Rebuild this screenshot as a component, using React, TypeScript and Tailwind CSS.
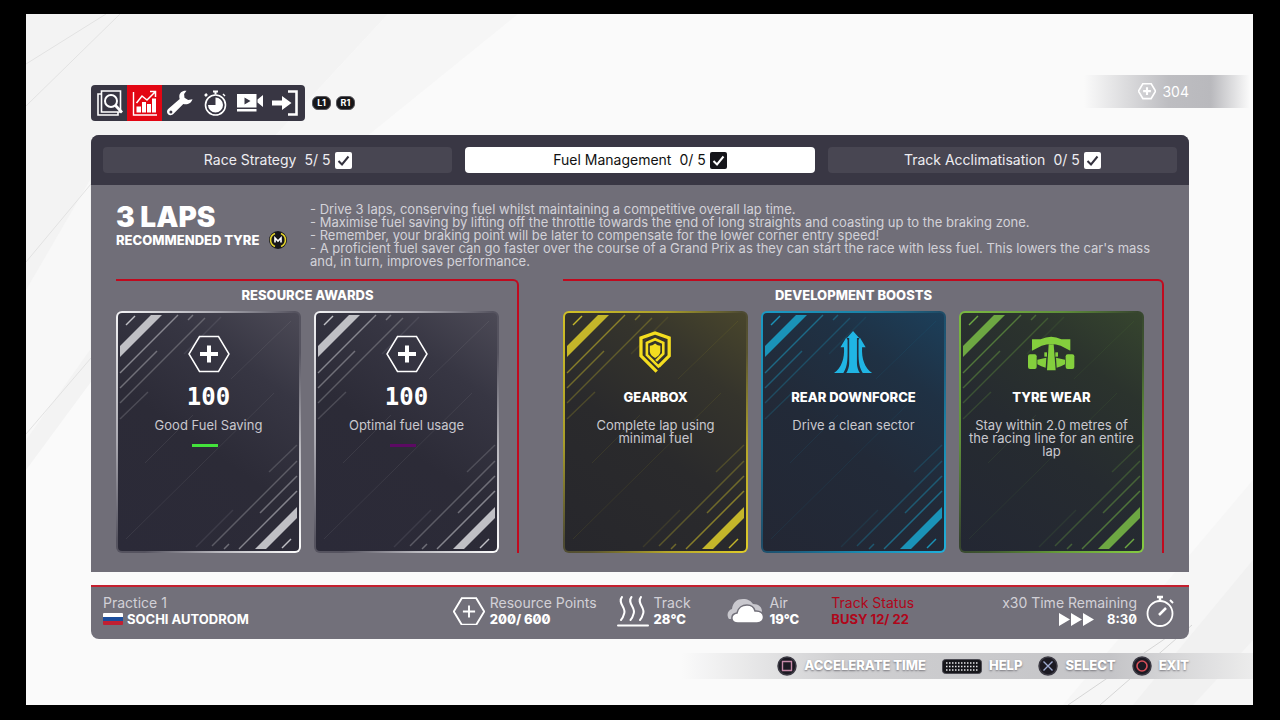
import type { ReactNode } from "react";

interface IconProps {
  className?: string;
}

interface Theme {
  frame: string;
  face: string;
  stripe: string;
}

interface CardData {
  id: string;
  icon: ReactNode;
  title: string;
  text: string;
  theme: Theme;
  reward?: boolean;
  bar?: string;
}

// ---------- Icons ----------

function SearchPagesIcon({ className }: IconProps) {
  return (
    <svg viewBox="0 0 26 26" className={className} fill="none" stroke="currentColor" aria-hidden="true">
      <path d="M4.500 1h19v21h-19z" strokeWidth="1.6" />
      <path d="M4 4H1v21h20v-3" strokeWidth="1.6" />
      <circle cx="14" cy="11" r="6" strokeWidth="2" />
      <path d="m18.500 15.500 6.500 7" strokeWidth="2.800" />
    </svg>
  );
}

function ChartIcon({ className }: IconProps) {
  return (
    <svg viewBox="0 0 26 26" className={className} fill="none" stroke="currentColor" aria-hidden="true">
      <path d="M1.500 2v23H25" strokeWidth="1.4" />
      <path d="M4.500 22.500v-6h4.500v6zM10 22.500V12h4v10.500zM15 22.500V14h4v8.500zM20 22.500V8.500h4v14z" fill="currentColor" stroke="none" />
      <path d="m4.500 13 5.500-7 5 4 8-8M18 1.500h5.500V7" strokeWidth="1.5" />
    </svg>
  );
}

function WrenchIcon({ className }: IconProps) {
  return (
    <svg viewBox="0 0 26 26" className={className} aria-hidden="true">
      <path
        d="M19.500.800c-4-.6-7.300 2-7.200 5.700 0 1 .1 1.700.4 2.500l-11 9.600c-1.900 1.600-2.300 4-.7 5.600 1.600 1.700 4.200 1.300 5.800-.6l9.500-9.700c4.200 1.200 8.200-1 9.200-4.700l-4.300.800-3.700-2.300-.4-3.800zM3.900 20.500a1.500 1.500 0 1 1 0 3 1.500 1.500 0 0 1 0-3z"
        fill="currentColor"
        fillRule="evenodd"
      />
    </svg>
  );
}

function TimerIcon({ className }: IconProps) {
  return (
    <svg viewBox="0 0 26 26" className={className} fill="none" stroke="currentColor" aria-hidden="true">
      <circle cx="13.500" cy="15" r="10" strokeWidth="1.6" />
      <path d="M13.500 7.500v7.500H6a7.500 7.500 0 1 0 7.500-7.500z" fill="currentColor" stroke="none" />
      <path d="M11 1.500h5M13.500 1.500v3" strokeWidth="2" />
      <path d="m3 6 2-2" strokeWidth="2.500" />
      <path d="m21 4 2 2" strokeWidth="1.500" />
    </svg>
  );
}

function VideoIcon({ className }: IconProps) {
  return (
    <svg viewBox="0 0 26 26" className={className} aria-hidden="true">
      <path d="M0 4h19.500v13.500H0zM7.500 7.500v7l6-3.500z" fill="currentColor" fillRule="evenodd" />
      <path d="M20.500 9.500 26 5v12l-5.500-4.500zM0 19h19.500v2.500H0z" fill="currentColor" />
    </svg>
  );
}

function ExitIcon({ className }: IconProps) {
  return (
    <svg viewBox="0 0 26 26" className={className} fill="none" stroke="currentColor" aria-hidden="true">
      <path d="M0 10.500h10V6l9.500 7L10 20v-4.500H0z" fill="currentColor" stroke="none" />
      <path d="M16 1.500h8.500v23H16" strokeWidth="2.600" />
    </svg>
  );
}

function HexPlusIcon({ className, bold }: IconProps & { bold?: boolean }) {
  return (
    <svg viewBox="0 0 42 38" className={className} fill="none" stroke="currentColor" aria-hidden="true">
      <path d="M11.500 1.500h19L41 19 30.500 36.500h-19L1 19z" strokeWidth={bold ? 4 : 2.500} />
      <path d={bold ? "M12 19h18M21 10v18" : "M13 19h16M21 11v16"} strokeWidth={bold ? 5 : 2.500} />
    </svg>
  );
}

function AwardIcon() {
  return (
    <svg viewBox="0 0 42 42" className="size-[42px]" fill="none" aria-hidden="true">
      <path d="M11.500 5.500h19L41 23l-10.500 17.500h-19L1 23z" stroke="#fff" strokeWidth="1.5" />
      <path d="M12 23h18M21 14.500v17" stroke="#fff" strokeWidth="4" />
    </svg>
  );
}

function GearboxIcon() {
  return (
    <svg viewBox="0 0 98 128" className="h-[42px]" fill="none" stroke="#f4dd1f" aria-hidden="true">
      <path d="M54 124 6 76V21L49 6l43 15v55L60 108" strokeWidth="10" />
      <path d="M62 111 24 73V36l25-11 25 11v33L52 91" strokeWidth="8" />
      <path d="M49 38c6 5 10 6 16 7v18c-1 9-8 15-16 19-8-4-15-10-16-19V45c6-1 10-2 16-7z" fill="#f4dd1f" stroke="none" />
    </svg>
  );
}

function DownforceIcon() {
  return (
    <svg viewBox="0 0 118 130" className="h-[42px]" fill="#20b5e4" aria-hidden="true">
      <path d="m59 0 19 22h-7v78c0 12 4 22 9 30H38c5-8 9-18 9-30V22h-7z" />
      <path d="M38 20 20 50h11c2 36-8 64-31 80h29c10-14 13-34 13-60V28z" />
      <path d="m80 20 18 30H87c-2 36 8 64 31 80H89c-10-14-13-34-13-60V28z" />
    </svg>
  );
}

function TyreIcon() {
  return (
    <svg viewBox="0 -20 139 126" className="h-[42px]" fill="#84cf3d" aria-hidden="true">
      <path d="M12 5h26Q70-10 100 5h27v34L98 24Q70 14 41 24L12 39z" />
      <rect x="0" y="50" width="26" height="44" rx="6" />
      <rect x="113" y="50" width="26" height="44" rx="6" />
      <path d="M62 20h15l6 78H57z" />
      <path d="m28 66 27-6-2 30-13-4-12-6zM111 66l-27-6 2 30 13-4 12-6z" />
      <rect x="49" y="44" width="8" height="13" />
      <rect x="82" y="44" width="8" height="13" />
    </svg>
  );
}

function HeatIcon() {
  return (
    <svg viewBox="0 0 32 32" className="size-8" fill="none" stroke="#fff" strokeLinecap="round" aria-hidden="true">
      <path d="M5 2c-5 6 5 11 2 17-.5 2-1 4-3 6M14.500 2c-5 6 5 11 2 17-.5 2-1 4-3 6M24 2c-5 6 5 11 2 17-.5 2-1 4-3 6" strokeWidth="2" />
      <path d="M1 30.500h30" strokeWidth="2" />
    </svg>
  );
}

function CloudIcon() {
  return (
    <svg viewBox="0 0 37 26" className="w-[37px]" aria-hidden="true">
      <path d="M2 21c-3-4-1-9 3-10C6 4 10 1 16 1c5 0 8 2 10 5 6 0 9 3 9 8 0 4-3 6-6 6z" fill="#c9c8ce" />
      <path d="M11 25c-8 0-8-9-1-10 1-5 5-8 10-8 4 0 7 2 8 6 11-1 11 12 2 12z" fill="#fff" stroke="#72707a" strokeWidth="1.500" />
    </svg>
  );
}

function StopwatchIcon() {
  return (
    <svg viewBox="0 0 30 34" className="h-[34px]" fill="none" stroke="#fff" aria-hidden="true">
      <circle cx="15" cy="19.500" r="12.500" strokeWidth="1.800" />
      <path d="M12 3h6M15 3v4" strokeWidth="2.500" />
      <path d="m25 6 3 3" strokeWidth="2" />
      <path d="m14 21 7-7" strokeWidth="2.500" />
    </svg>
  );
}

function FastForwardIcon() {
  return (
    <svg viewBox="0 0 36 13" className="h-[13px]" fill="#fff" aria-hidden="true">
      <path d="M0 0v13l11-6.500zM12 0v13l11-6.500zM24 0v13l11-6.500z" />
    </svg>
  );
}

function RussiaFlag() {
  return (
    <span className="flex h-3 w-5 flex-col overflow-hidden rounded-[1px]">
      <span className="flex-1 bg-white" />
      <span className="flex-1 bg-[#1c4e9c]" />
      <span className="flex-1 bg-[#c01f32]" />
    </span>
  );
}

function PadIcon({ children }: { children: ReactNode }) {
  return (
    <svg viewBox="0 0 20 20" className="size-5" fill="none" aria-hidden="true">
      <circle cx="10" cy="10" r="9" fill="#1c1a23" stroke="#3c3a44" strokeWidth="1.500" />
      {children}
    </svg>
  );
}

function KeyboardIcon() {
  return (
    <svg viewBox="0 0 40 15" className="h-[15px]" aria-hidden="true">
      <rect x="0.500" y="0.500" width="39" height="14" rx="3" fill="#17171b" stroke="#4b4a52" />
      <path d="M4 4h32M4 7.500h32M4 11h32" stroke="#e8e8ea" strokeWidth="1.500" strokeDasharray="1.500 1.500" />
    </svg>
  );
}

// ---------- Data ----------

const NAV = [
  { label: "Overview", Icon: SearchPagesIcon },
  { label: "Practice programmes", Icon: ChartIcon, active: true },
  { label: "Car setup", Icon: WrenchIcon },
  { label: "Session times", Icon: TimerIcon },
  { label: "Replay", Icon: VideoIcon },
  { label: "Leave garage", Icon: ExitIcon },
];

const TABS = [
  { name: "Race Strategy", progress: "5/ 5" },
  { name: "Fuel Management", progress: "0/ 5", active: true },
  { name: "Track Acclimatisation", progress: "0/ 5" },
];

const BRIEFING = [
  "- Drive 3 laps, conserving fuel whilst maintaining a competitive overall lap time.",
  "- Maximise fuel saving by lifting off the throttle towards the end of long straights and coasting up to the braking zone.",
  "- Remember, your braking point will be later to compensate for the lower corner entry speed!",
  "- A proficient fuel saver can go faster over the course of a Grand Prix as they can start the race with less fuel. This lowers the car's mass and, in turn, improves performance.",
];

const SILVER: Theme = {
  frame: "bg-[linear-gradient(128deg,#f4f4f6_0%,#a9a8b0_28%,#55535f_48%,#55535f_58%,#b9b8be_78%,#ffffff_100%)]",
  face: "bg-[linear-gradient(35deg,#2b2a38_0%,#2c2b37_45%,#373643_75%,#4c4a56_100%)]",
  stripe: "text-[#c0c0c5]",
};
const YELLOW: Theme = {
  frame: "bg-[linear-gradient(128deg,#d3c226_0%,#a89d2a_28%,#4d4a33_48%,#5a5530_58%,#b5a62b_78%,#e0cd2a_100%)]",
  face: "bg-[linear-gradient(35deg,#27272c_0%,#2a2a2c_45%,#35342c_75%,#49462c_100%)]",
  stripe: "text-[#c4b62a]",
};
const BLUE: Theme = {
  frame: "bg-[linear-gradient(128deg,#1a9cc7_0%,#1a81a6_28%,#1f4c67_48%,#1d5a7a_58%,#1a8db4_78%,#1fb0dc_100%)]",
  face: "bg-[linear-gradient(35deg,#232734_0%,#222a38_45%,#1f3144_75%,#1c3f5a_100%)]",
  stripe: "text-[#1a93b8]",
};
const GREEN: Theme = {
  frame: "bg-[linear-gradient(128deg,#7cbb40_0%,#5f8f3a_28%,#37452f_48%,#3f5730_58%,#68a03a_78%,#86cc42_100%)]",
  face: "bg-[linear-gradient(35deg,#232733_0%,#262b30_45%,#2b332d_75%,#36452e_100%)]",
  stripe: "text-[#6da742]",
};

const AWARDS: CardData[] = [
  { id: "good", icon: <AwardIcon />, title: "100", text: "Good Fuel Saving", theme: SILVER, reward: true, bar: "bg-[#43e23b]" },
  { id: "optimal", icon: <AwardIcon />, title: "100", text: "Optimal fuel usage", theme: SILVER, reward: true, bar: "bg-[#5c0a63]" },
];

const BOOSTS: CardData[] = [
  { id: "gearbox", icon: <GearboxIcon />, title: "GEARBOX", text: "Complete lap using\nminimal fuel", theme: YELLOW },
  { id: "downforce", icon: <DownforceIcon />, title: "REAR DOWNFORCE", text: "Drive a clean sector", theme: BLUE },
  { id: "tyre", icon: <TyreIcon />, title: "TYRE WEAR", text: "Stay within 2.0 metres of the racing line for an entire lap", theme: GREEN },
];

const PROMPTS = [
  { label: "ACCELERATE TIME", icon: <PadIcon><path d="M5.500 5.500h9v9h-9z" stroke="#c58aa8" strokeWidth="1.400" /></PadIcon> },
  { label: "HELP", icon: <KeyboardIcon /> },
  { label: "SELECT", icon: <PadIcon><path d="m5.500 5.500 9 9m0-9-9 9" stroke="#9fabd2" strokeWidth="1.400" /></PadIcon> },
  { label: "EXIT", icon: <PadIcon><circle cx="10" cy="10" r="5" stroke="#d8505a" strokeWidth="1.600" /></PadIcon> },
];

// ---------- Pieces ----------

function Backdrop() {
  return (
    <svg viewBox="26 14 1227 691" preserveAspectRatio="none" className="absolute inset-0 size-full" aria-hidden="true">
      <path d="M26 14h362L262 150 26 470z" fill="#f3f3f3" />
      <path d="M388 14h130L350 150h-88z" fill="#f6f6f6" />
      <path d="M26 290l64-110v170l-64 90z" fill="#f8f8f8" />
      <path d="M1253 480v225h-190z" fill="#f6f6f6" />
      <path d="M1253 560v80l-60 65h-60z" fill="#f1f1f1" />
      <path d="M26 64 106 14M26 106 120 14M26 262l65-78M26 434l65-76" stroke="#e2e2e2" fill="none" />
      <path d="m1068 705 98-67M1100 705l92-80" stroke="#d6d6d6" fill="none" />
    </svg>
  );
}

function StripeSet() {
  return (
    <>
      <path d="M4 35 35 4h11L4 46z" fill="currentColor" />
      <g stroke="currentColor" strokeWidth="1.500">
        <path d="m10 14 9-9" />
        <path d="M4 62 62 4" opacity="0.6" />
        <path d="m4 77 37-37M72 9l5-5" opacity="0.45" />
        <path d="M4 92 89 7" opacity="0.32" />
        <path d="m4 108 28-27" opacity="0.22" />
        <path d="m68 43 37-37" opacity="0.12" />
      </g>
    </>
  );
}

function Card({ card }: { card: CardData }) {
  return (
    <article className={`rounded-md p-0.5 ${card.theme.frame}`}>
      <div className={`relative flex h-[238px] flex-col items-center overflow-hidden rounded-sm px-1.5 pt-[18px] text-center ${card.theme.face}`}>
        <svg
          viewBox="2 2 181 238"
          preserveAspectRatio="none"
          fill="none"
          className={`absolute inset-0 size-full ${card.theme.stripe}`}
          aria-hidden="true"
        >
          <StripeSet />
          <g transform="rotate(180 92.5 121)">
            <StripeSet />
          </g>
          <path d="m10 228 148-146M29 152l48-48M115 68l60-58" stroke="currentColor" opacity="0.1" />
        </svg>
        <div className="relative">{card.icon}</div>
        {card.reward ? (
          <h3 className="relative mt-3.5 font-['DejaVu_Sans_Mono',monospace] text-2xl leading-5 font-bold">{card.title}</h3>
        ) : (
          <h3 className="relative mt-3.5 text-[13px] leading-5 font-extrabold">{card.title}</h3>
        )}
        <p className="relative mt-3 text-[13px] leading-[13px] whitespace-pre-line text-[#c9c8ce]">{card.text}</p>
        {card.bar && <span className={`relative mt-3 mr-2 h-[3px] w-[26px] ${card.bar}`} />}
      </div>
    </article>
  );
}

function Section({ title, cards, columns }: { title: string; cards: CardData[]; columns: string }) {
  return (
    <section className="rounded-tr-md border-t-2 border-r-2 border-[#c00a1e] pr-[18px]">
      <h2 className="flex h-[30px] items-center justify-center text-[13px] font-extrabold">{title}</h2>
      <div className={`grid gap-[13px] ${columns}`}>
        {cards.map((card) => (
          <Card key={card.id} card={card} />
        ))}
      </div>
    </section>
  );
}

function Stat({ icon, label, value }: { icon: ReactNode; label: string; value: string }) {
  return (
    <div className="flex items-center gap-[5px]">
      {icon}
      <div>
        <p className="text-sm leading-4 text-[#d2d1d7]">{label}</p>
        <p className="font-extrabold slashed-zero">{value}</p>
      </div>
    </div>
  );
}

export default function App() {
  return (
    <div className="flex min-h-screen flex-col bg-black pt-3.5 pr-[27px] pb-[15px] pl-[26px] font-['Inter',sans-serif] text-[13px] text-white">
      <div className="relative flex-1 overflow-hidden bg-[#fafafa] pt-[61px] pr-16 pl-[65px]">
        <Backdrop />

        {/* Top bar */}
        <header className="relative flex items-start justify-between">
          <div className="mt-2.5 flex items-center gap-[7px]">
            <nav className="flex overflow-hidden rounded bg-[#383643] pr-[3px] pl-px">
              {NAV.map(({ label, Icon, active }) => (
                <button
                  key={label}
                  type="button"
                  aria-label={label}
                  className={`flex h-9 w-[35px] items-center justify-center ${active ? "bg-[#e30613]" : ""}`}
                >
                  <Icon className="size-[26px]" />
                </button>
              ))}
            </nav>
            <div className="flex gap-[5px]">
              {["L1", "R1"].map((key) => (
                <kbd
                  key={key}
                  className="flex h-3.5 w-[19px] items-center justify-center rounded-md border border-[#55545a] bg-[#161619] font-['Inter',sans-serif] text-[9px] font-bold"
                >
                  {key}
                </kbd>
              ))}
            </div>
          </div>
          <div className="-mr-16 flex h-[33px] items-center gap-1.5 bg-[linear-gradient(90deg,transparent_0%,#bdbdc1_50%,#b9b9bd_75%,transparent_98%)] pr-16 pl-[54px] text-sm">
            <HexPlusIcon bold className="w-[18px]" />
            304
          </div>
        </header>

        {/* Programme panel */}
        <main className="relative mt-3.5 overflow-hidden rounded-t-lg bg-[#706e78]">
          <div className="grid grid-cols-3 gap-[13px] bg-[#393744] p-3">
            {TABS.map((tab) => (
              <button
                key={tab.name}
                type="button"
                className={`flex h-[26px] items-center justify-center rounded text-sm ${
                  tab.active ? "bg-white text-[#111]" : "bg-[#484652] text-[#eeedf1]"
                }`}
              >
                <span>{tab.name}</span>
                <span className="ml-2">{tab.progress}</span>
                <svg viewBox="0 0 17 17" className="ml-1 size-[17px]" fill="none" aria-hidden="true">
                  <rect width="17" height="17" rx="2" fill={tab.active ? "#15151a" : "#fff"} />
                  <path d="m3.500 9 3.500 3.500 6.500-8" stroke={tab.active ? "#fff" : "#34323f"} strokeWidth="2" />
                </svg>
              </button>
            ))}
          </div>

          <div className="px-[25px] pt-[18px] pb-[19px]">
            <div className="flex">
              <div className="w-[194px] shrink-0">
                <h1 className="text-[28px] leading-7 font-black">3 LAPS</h1>
                <p className="flex items-center gap-2.5 text-[13px] leading-4 font-extrabold">
                  RECOMMENDED TYRE
                  <svg viewBox="0 0 18 18" className="size-[18px]" fill="none" aria-hidden="true">
                    <circle cx="9" cy="9" r="9" fill="#17171a" />
                    <path d="M6 2.500a7 7 0 0 0 0 13M12 2.500a7 7 0 0 1 0 13" stroke="#e3d32c" strokeWidth="1.600" />
                    <path d="M6 11.500V7l3 3 3-3v4.500" stroke="#fff" strokeWidth="1.600" />
                  </svg>
                </p>
              </div>
              <div className="leading-[13px] text-[#d3d2d8]">
                {BRIEFING.map((line) => (
                  <p key={line}>{line}</p>
                ))}
              </div>
            </div>

            <div className="mt-[11px] grid grid-cols-[403fr_601fr] gap-11">
              <Section title="RESOURCE AWARDS" cards={AWARDS} columns="grid-cols-2" />
              <Section title="DEVELOPMENT BOOSTS" cards={BOOSTS} columns="grid-cols-3" />
            </div>
          </div>
        </main>

        {/* Session status */}
        <div className="relative mt-[13px] grid h-[54px] grid-cols-[350fr_164fr_111fr_104fr_346fr] items-center rounded-b-lg border-t-2 border-[#c4202f] bg-[#72707a] px-3 pb-1 leading-4">
          <div>
            <p className="text-sm leading-4 text-[#d2d1d7]">Practice 1</p>
            <p className="flex items-center gap-1 font-bold">
              <RussiaFlag />
              SOCHI AUTODROM
            </p>
          </div>
          <Stat icon={<HexPlusIcon className="w-8" />} label="Resource Points" value="200/ 600" />
          <Stat icon={<HeatIcon />} label="Track" value="28°C" />
          <Stat icon={<CloudIcon />} label="Air" value="19°C" />
          <div className="flex items-center justify-between text-[#b0061a]">
            <div>
              <p className="text-sm leading-4">Track Status</p>
              <p className="font-bold">BUSY 12/ 22</p>
            </div>
            <div className="flex items-center gap-2 pr-0.5 text-white">
              <div>
                <p className="text-sm leading-4 text-[#d2d1d7]">x30 Time Remaining</p>
                <p className="flex items-center justify-end gap-3 font-bold slashed-zero">
                  <FastForwardIcon />
                  8:30
                </p>
              </div>
              <StopwatchIcon />
            </div>
          </div>
        </div>

        {/* Button prompts */}
        <footer className="relative mt-3.5 -mr-16 ml-[590px] flex h-[26px] items-center justify-end gap-4 bg-[linear-gradient(90deg,transparent_0%,#cfcfd1_28%,#c4c4c7_75%,#ececec_100%)] pr-16">
          {PROMPTS.map((prompt) => (
            <button
              key={prompt.label}
              type="button"
              className="flex items-center gap-[7px] font-extrabold whitespace-nowrap [text-shadow:0_1px_2px_#77767c]"
            >
              {prompt.icon}
              {prompt.label}
            </button>
          ))}
        </footer>
      </div>
    </div>
  );
}
